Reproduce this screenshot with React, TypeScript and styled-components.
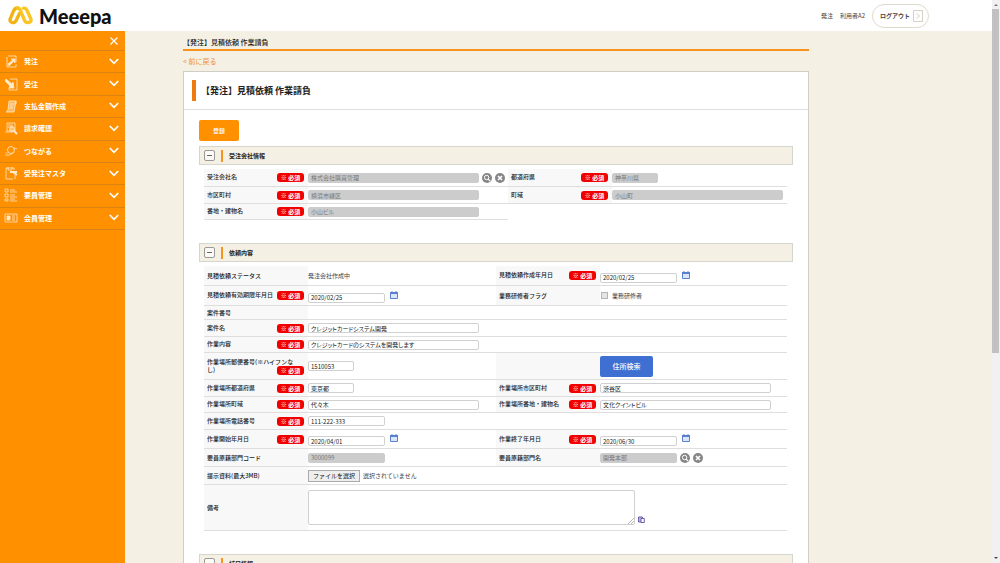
import React from 'react';
import styled, { createGlobalStyle, css } from 'styled-components';

const font = '"Noto Sans CJK JP", "Noto Sans", sans-serif';

const GlobalStyle = createGlobalStyle`
  *, *::before, *::after { box-sizing: border-box; }
  body { margin: 0; background: #f4f1e4; color: #222; font: 6px/8px ${font}; }
  button, input, textarea { font: inherit; color: inherit; margin: 0; }
  button { cursor: pointer; }
  svg { display: block; flex: none; }
`;

const Shell = styled.div`
  display: flex;
  height: 100vh;
  overflow: hidden;
`;

const Page = styled.div`
  flex: 1;
  min-width: 0;
  display: flex;
  flex-direction: column;
`;

const Header = styled.header`
  flex: none;
  height: 31px;
  background: #fff;
  display: flex;
  align-items: center;
  justify-content: space-between;
  padding: 0 63px 0 8px;
`;

const Logo = styled.a`
  display: flex;
  align-items: center;
  gap: 6px;
  color: #111;
  text-decoration: none;
  font: 900 20px/24px Lato, sans-serif;
`;

const Account = styled.div`
  display: flex;
  align-items: center;
  gap: 7px;
  color: #444;
`;

const Logout = styled.button`
  height: 24px;
  display: flex;
  align-items: center;
  gap: 3px;
  padding: 0 5px 0 7px;
  border: 1px solid #dedacb;
  border-radius: 12px;
  background: #fff;
  font-weight: 700;
`;

const Body = styled.div`
  flex: 1;
  min-height: 0;
  display: flex;
`;

const Sidebar = styled.aside`
  width: 125px;
  flex: none;
  background: #ff9100;
`;

const SidebarTop = styled.div`
  height: 20px;
  display: flex;
  align-items: center;
  justify-content: flex-end;
  padding-right: 6px;
  border-bottom: 1px solid #d98312;
`;

const IconButton = styled.button`
  display: block;
  padding: 0;
  border: 0;
  background: none;
  color: inherit;
`;

const Menu = styled.nav`
  display: grid;
  grid-template-rows: repeat(8, 1fr);
  height: 179px;
`;

const MenuItem = styled.button`
  display: grid;
  grid-template-columns: 14px 1fr 10px;
  align-items: center;
  gap: 6px;
  padding: 0 6px 1px 4px;
  border: 0;
  border-bottom: 1px solid #d98312;
  background: none;
  color: #fff;
  font-size: 7px;
  font-weight: 700;
  text-align: left;
`;

const Main = styled.main`
  flex: 1;
  min-width: 0;
  padding: 0 183px 0 58px;
  overflow: hidden;
`;

const Crumb = styled.div`
  height: 20px;
  padding-top: 2px;
  border-bottom: 2px solid #f7931e;
  font-size: 7px;
  line-height: 18px;
  font-weight: 500;
`;

const BackLink = styled.a`
  display: block;
  color: #f08c3c;
  font-size: 7px;
  line-height: 20px;
  text-decoration: none;
`;

const Card = styled.section`
  border: 1px solid #cfcdc4;
  background: #fff;
`;

const CardHeader = styled.div`
  display: flex;
  align-items: center;
  gap: 5px;
  height: 38px;
  padding-left: 8px;
  border-bottom: 1px solid #ddd;
`;

const TitleMark = styled.span`
  width: 4px;
  height: 21px;
  background: #ef7a10;
`;

const Title = styled.h1`
  margin: 0;
  font-size: 9px;
  line-height: 14px;
  font-weight: 700;
`;

const CardBody = styled.div`
  padding: 10px 15px 0;
`;

const Actions = styled.div`
  padding-bottom: 5px;
`;

const ActionButton = styled.button<{ $blue?: boolean }>`
  display: block;
  width: ${p => (p.$blue ? 53 : 40)}px;
  height: 21px;
  padding: 0;
  border: 0;
  border-radius: 2px;
  background: ${p => (p.$blue ? '#3f6fd1' : '#ff9100')};
  color: #fff;
  font-size: ${p => (p.$blue ? 7 : 6)}px;
  font-weight: 500;
`;

const SectionBar = styled.div`
  display: flex;
  align-items: center;
  height: 19px;
  padding-left: 4px;
  border: 1px solid #d6d6ce;
  background: #f4f0e3;
`;

const Toggle = styled.button`
  width: 11px;
  height: 11px;
  padding: 0 2px;
  border: 1px solid #999;
  border-radius: 2px;
  background: #fcfbf6;
  &::before { content: ''; display: block; height: 1px; background: #666; }
`;

const SectionTitle = styled.h2`
  margin: 0 0 0 6px;
  padding-left: 6px;
  border-left: 2px solid #f7931e;
  font-size: 6px;
  line-height: 12px;
  font-weight: 700;
`;

const Fields = styled.div`
  padding: 4px 6px 23px 5px;
`;

const Split = styled.div`
  display: grid;
  grid-template-columns: 304fr 279fr;
  align-items: start;
`;

const Row = styled.div<{ $height: number; $pair?: boolean }>`
  display: grid;
  grid-template-columns: ${p => (p.$pair ? '104px 188fr 104px 187fr' : '104px 1fr')};
  min-height: ${p => p.$height}px;
  border-bottom: 1px solid #dedede;
`;

const LabelCell = styled.div`
  display: flex;
  align-items: center;
  padding: 0 4px 0 3px;
  background: #f8f8f8;
`;

const LabelLine = styled.div`
  flex: 1;
  white-space: pre-line;
  font-weight: 500;
`;

const Required = styled.span`
  float: right;
  width: 27px;
  height: 9px;
  border-radius: 3px;
  background: #f00000;
  color: #fff;
  font-weight: 700;
  line-height: 9px;
  text-align: center;
`;

const ValueCell = styled.div<{ $low?: boolean }>`
  display: flex;
  align-items: center;
  gap: 3px;
  padding-top: ${p => (p.$low ? 4 : 0)}px;
  color: #444;
`;

const widths = { sm: 46, md: 77, lg: 171 };

const control = css`
  border: 1px solid #d0d0d0;
  border-radius: 2px;
  background: #fff;
  color: #222;
  font-feature-settings: 'palt';
`;

const TextBox = styled.input<{ $size: keyof typeof widths }>`
  ${control}
  width: ${p => widths[p.$size]}px;
  height: 10px;
  padding: 0 2px;
  line-height: 8px;
  &:disabled { border-color: #ccc; background: #ccc; color: #777; }
`;

const NoteArea = styled.div`
  position: relative;
  display: flex;
`;

const Note = styled.textarea`
  ${control}
  width: 327px;
  height: 35px;
  padding: 2px;
  resize: none;
`;

const Grip = styled.svg`
  position: absolute;
  right: 1px;
  bottom: 1px;
`;

const DateIcon = styled.span`
  margin: 0 0 6px 2px;
`;

const PasteButton = styled(IconButton)`
  align-self: flex-end;
  margin-bottom: 7px;
`;

const Check = styled.input`
  appearance: none;
  width: 7px;
  height: 7px;
  margin: 0 1px;
  border: 1px solid #b4b4b4;
  background: #e4e4e4;
`;

const FilePicker = styled.label`
  display: flex;
  align-items: center;
  gap: 3px;
`;

const HiddenFile = styled.input`
  position: absolute;
  width: 1px;
  height: 1px;
  opacity: 0;
`;

const FileButton = styled.span`
  width: 52px;
  height: 12px;
  border: 1px solid #aaa;
  background: #eee;
  color: #111;
  line-height: 10px;
  text-align: center;
`;

const ScrollTrack = styled.div`
  width: 8px;
  flex: none;
  display: flex;
  flex-direction: column;
  align-items: center;
  padding: 4px 0;
  background: #f1f1f1;
`;

const Thumb = styled.div`
  flex: 0 0 62%;
  width: 7px;
  margin: 3px 1px auto 0;
  background: #c1c1c1;
`;

const LogoMark = () => (
  <svg width="25" height="19" viewBox="0 0 25 19" fill="none" strokeLinecap="round" strokeLinejoin="round" strokeWidth="3.4">
    <path d="M11.500 7.500 8.200 14.500Q7 17 4.400 16.600 1.200 15.800 2.200 12.800L5.800 4.400Q7.200 1.700 9.800 2" stroke="#f0b414" />
    <path d="M9.800 2Q11.600 2.300 12.400 4.400L16.400 14.200Q17.600 17 20.400 16.600 23.800 15.800 22.800 12.800L19 4.400Q17.800 1.900 15.400 2.100" stroke="#f9c623" />
  </svg>
);

const Chevron = () => (
  <svg width="10" height="7" viewBox="0 0 10 7" fill="none" stroke="#fff" strokeWidth="1.7">
    <path d="M.8 1 5 5.300 9.200 1" />
  </svg>
);

const SearchIcon = () => (
  <svg width="10" height="10" viewBox="0 0 10 10">
    <circle cx="5" cy="5" r="5" fill="#868686" />
    <circle cx="4.600" cy="4.500" r="2.200" fill="none" stroke="#fff" />
    <path d="m6.200 6.200 2 2" stroke="#fff" strokeWidth="1.200" />
  </svg>
);

const ClearIcon = () => (
  <svg width="10" height="10" viewBox="0 0 10 10">
    <circle cx="5" cy="5" r="5" fill="#868686" />
    <path d="m3 3 4 4M7 3 3 7" stroke="#fff" strokeWidth="1.600" />
  </svg>
);

const CalendarIcon = () => (
  <svg width="8" height="8" viewBox="0 0 8 8">
    <path d="M.5 1.500h7v6h-7z" fill="#dbe6fa" stroke="#5a80d0" />
    <path d="M0 1h8v2H0zM1.500 0h1v2h-1zM5.500 0h1v2h-1z" fill="#5a80d0" />
  </svg>
);

const PasteIcon = () => (
  <svg width="7" height="7" viewBox="0 0 7 7" fill="#fff" stroke="#6a62a8">
    <path d="M.5 1h4v5h-4z" fill="#b9b5dc" />
    <path d="M3 2.500h3.300v4H3z" />
  </svg>
);

const menu: [string, React.ReactNode][] = [
  ['発注', <><path d="M4 2h8v6M3 3v10h9v-3" /><path d="m4 10 5-4-2-1h4v4l-1-2-5 5z" fill="#fff" /></>],
  ['受注', <><path d="M6 2h7v11H5v-2" /><path d="m2 2 6 5 1-2 1 6H5l1-2-5-5z" fill="#fff" /></>],
  ['支払金額作成', <><path d="M5 2h7l-2 11H2l2-2z" fill="#ffffff77" /><path d="M6 5h4M6 7h3M5 9h4M12 2v3h-2" /></>],
  ['請求確認', <><path d="M3 2h8v8H3zM1 11h8M4 4h5M4 6h5" /><circle cx="8" cy="8" r="2.500" fill="#ffffff88" /><path d="m10 10 3 3" strokeWidth="2" /></>],
  ['つながる', <><circle cx="7" cy="6" r="3.500" /><path d="M1 11c4 1 7-1 9-3M9 5c2-1 3-1 4 0M2 8c0 1 1 2 2 2" /></>],
  ['受発注マスタ', <><path d="M9 13H2V2h8v2M4 1v3h4V1" /><path d="M6 6h7M9 6l4 3" strokeWidth="2" /><path d="M11 9v4" /></>],
  ['要員管理', <><path d="M1 1h3v3H1zM1 6h3v3H1zM1 11h3v2H1zM6 2h5M6 4h7M6 7h5M6 9h7M6 11h5M6 13h7" /></>],
  ['会員管理', <><path d="M1 3h12v8H1zM8 5h3M8 7h3M8 9h3" /><path d="M3 5h3v4H3z" fill="#fff" /></>],
];

function Label({ text, required, htmlFor }: { text?: string; required?: boolean; htmlFor?: string }) {
  return (
    <LabelCell>
      <LabelLine>
        {text && <label htmlFor={htmlFor}>{text}</label>}
        {required && <Required>※ 必須</Required>}
      </LabelLine>
    </LabelCell>
  );
}

type FieldProps = {
  id: string;
  text: string;
  value: string;
  size?: keyof typeof widths;
  required?: boolean;
  disabled?: boolean;
  lookup?: boolean;
  date?: boolean;
};

function Field({ id, text, value, size = 'lg', required, disabled, lookup, date }: FieldProps) {
  return (
    <>
      <Label text={text} required={required} htmlFor={id} />
      <ValueCell $low={date}>
        <TextBox id={id} $size={size} defaultValue={value} disabled={disabled} />
        {lookup && (
          <>
            <IconButton aria-label="検索"><SearchIcon /></IconButton>
            <IconButton aria-label="クリア"><ClearIcon /></IconButton>
          </>
        )}
        {date && (
          <DateIcon>
            <IconButton aria-label="カレンダー"><CalendarIcon /></IconButton>
          </DateIcon>
        )}
      </ValueCell>
    </>
  );
}

function Bar({ title }: { title: string }) {
  return (
    <SectionBar>
      <Toggle aria-label="開閉" />
      <SectionTitle>{title}</SectionTitle>
    </SectionBar>
  );
}

export default function App() {
  return (
    <Shell>
      <GlobalStyle />
      <Page>
        <Header>
          <Logo href="#"><LogoMark />Meeepa</Logo>
          <Account>
            <span>発注</span>
            <span>利用者A2</span>
            <Logout>
              ログアウト
              <svg width="10" height="12" viewBox="0 0 10 12" fill="none" stroke="#d5d1c3">
                <path d="M.5.5h9v11h-9z" />
                <path d="m3.500 3.500 3 2.500-3 2.500" />
              </svg>
            </Logout>
          </Account>
        </Header>
        <Body>
          <Sidebar>
            <SidebarTop>
              <IconButton aria-label="閉じる">
                <svg width="10" height="10" viewBox="0 0 10 10" stroke="#fff" strokeWidth="1.300">
                  <path d="m1.500 1.500 7 7M8.500 1.500l-7 7" />
                </svg>
              </IconButton>
            </SidebarTop>
            <Menu>
              {menu.map(([name, icon]) => (
                <MenuItem key={name}>
                  <svg width="14" height="14" viewBox="0 0 14 14" fill="none" stroke="#fff" strokeWidth="0.800" opacity="0.800">{icon}</svg>
                  {name}
                  <Chevron />
                </MenuItem>
              ))}
            </Menu>
          </Sidebar>
          <Main>
            <Crumb>【発注】見積依頼 作業請負</Crumb>
            <BackLink href="#">&lt; 前に戻る</BackLink>
            <Card>
              <CardHeader>
                <TitleMark />
                <Title>【発注】見積依頼 作業請負</Title>
              </CardHeader>
              <CardBody>
                <Actions><ActionButton>登録</ActionButton></Actions>
                <Bar title="受注会社情報" />
                <Fields>
                  <Split>
                    <div>
                      <Row $height={18}><Field id="company" text="受注会社名" value="株式会社購買管理" required disabled lookup /></Row>
                      <Row $height={17}><Field id="city" text="市区町村" value="横浜市緑区" required disabled /></Row>
                      <Row $height={16}><Field id="building" text="番地・建物名" value="小山ビル" required disabled /></Row>
                    </div>
                    <div>
                      <Row $height={18}><Field id="pref" text="都道府県" value="神奈川県" size="sm" required disabled /></Row>
                      <Row $height={17}><Field id="town" text="町域" value="小山町" required disabled /></Row>
                    </div>
                  </Split>
                </Fields>
                <Bar title="依頼内容" />
                <Fields>
                  <Row $pair $height={20}>
                    <Label text="見積依頼ステータス" />
                    <ValueCell>発注会社作成中</ValueCell>
                    <Field id="created" text="見積依頼作成年月日" value="2020/02/25" size="md" required date />
                  </Row>
                  <Row $pair $height={20}>
                    <Field id="expires" text="見積依頼有効期限年月日" value="2020/02/25" size="md" required date />
                    <Label text="業務研修者フラグ" htmlFor="trainee" />
                    <ValueCell>
                      <Check id="trainee" type="checkbox" />
                      <label htmlFor="trainee">業務研修者</label>
                    </ValueCell>
                  </Row>
                  <Row $height={14}><Label text="案件番号" /></Row>
                  <Row $height={17}><Field id="project" text="案件名" value="クレジットカードシステム開発" required /></Row>
                  <Row $height={16}><Field id="work" text="作業内容" value="クレジットカードのシステムを開発します" required /></Row>
                  <Row $pair $height={27}>
                    <Field id="zip" text={'作業場所郵便番号(※ハイフンな\nし)'} value="1510053" size="sm" required />
                    <Label />
                    <ValueCell><ActionButton $blue>住所検索</ActionButton></ValueCell>
                  </Row>
                  <Row $pair $height={17}>
                    <Field id="workPref" text="作業場所都道府県" value="東京都" size="sm" required />
                    <Field id="workCity" text="作業場所市区町村" value="渋谷区" required />
                  </Row>
                  <Row $pair $height={16}>
                    <Field id="workTown" text="作業場所町域" value="代々木" required />
                    <Field id="workBuilding" text="作業場所番地・建物名" value="文化クイントビル" required />
                  </Row>
                  <Row $height={17}><Field id="tel" text="作業場所電話番号" value="111-222-333" size="md" required /></Row>
                  <Row $pair $height={19}>
                    <Field id="start" text="作業開始年月日" value="2020/04/01" size="md" required date />
                    <Field id="end" text="作業終了年月日" value="2020/06/30" size="md" required date />
                  </Row>
                  <Row $pair $height={18}>
                    <Field id="deptCode" text="要員原籍部門コード" value="3000099" size="md" disabled />
                    <Field id="deptName" text="要員原籍部門名" value="開発本部" size="md" disabled lookup />
                  </Row>
                  <Row $height={18}>
                    <Label text="提示資料(最大3MB)" htmlFor="file" />
                    <ValueCell>
                      <FilePicker>
                        <HiddenFile id="file" type="file" />
                        <FileButton>ファイルを選択</FileButton>
                        選択されていません
                      </FilePicker>
                    </ValueCell>
                  </Row>
                  <Row $height={46}>
                    <Label text="備考" htmlFor="note" />
                    <ValueCell>
                      <NoteArea>
                        <Note id="note" />
                        <Grip width="6" height="6" viewBox="0 0 6 6" stroke="#999" strokeWidth="0.700">
                          <path d="M0 6 6 0M3 6l3-3" />
                        </Grip>
                      </NoteArea>
                      <PasteButton aria-label="貼り付け"><PasteIcon /></PasteButton>
                    </ValueCell>
                  </Row>
                </Fields>
                <Bar title="補足情報" />
              </CardBody>
            </Card>
          </Main>
        </Body>
      </Page>
      <ScrollTrack aria-hidden="true">
        <svg width="4" height="2" viewBox="0 0 4 2"><path d="M0 2 2 0l2 2z" fill="#777" /></svg>
        <Thumb />
        <svg width="4" height="2" viewBox="0 0 4 2"><path d="m0 0 2 2 2-2z" fill="#444" /></svg>
      </ScrollTrack>
    </Shell>
  );
}
